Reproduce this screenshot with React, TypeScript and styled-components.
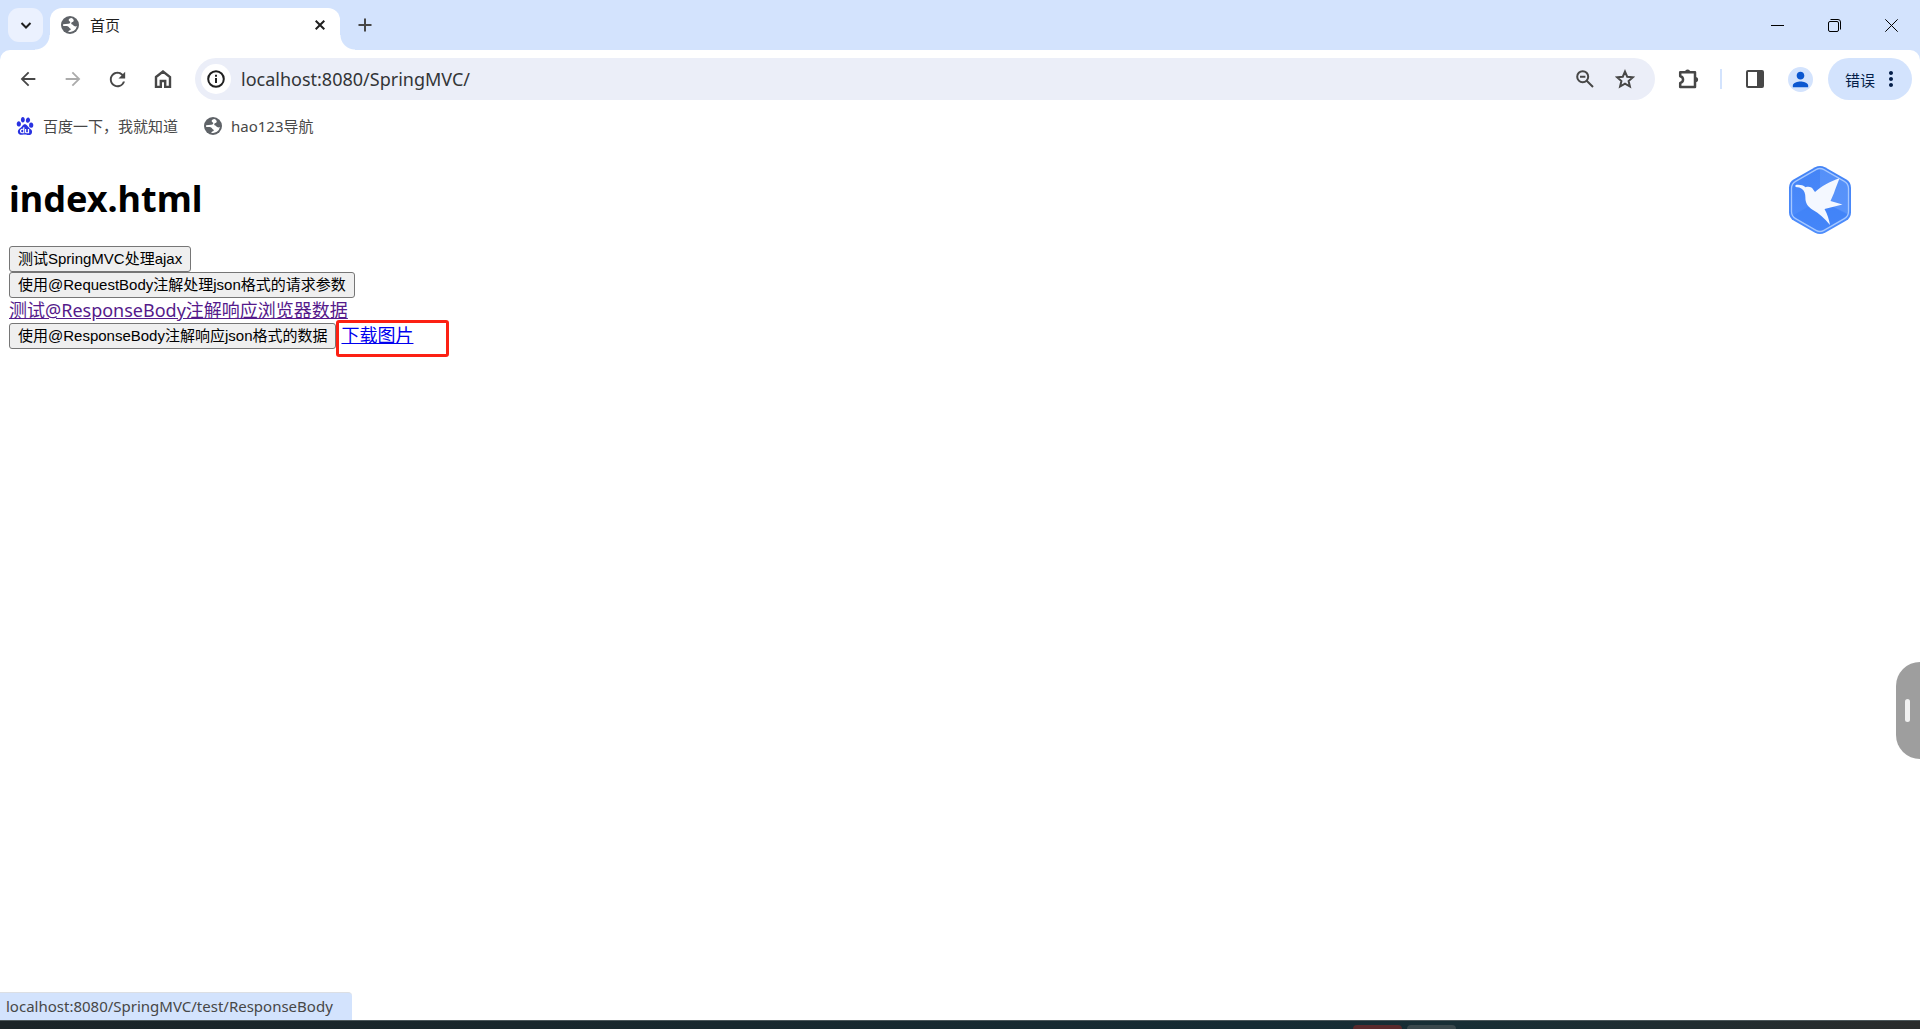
import React from "react";
import styled, { createGlobalStyle, css } from "styled-components";
import { MdArrowBack, MdArrowForward, MdRefresh, MdPerson, MdMoreVert } from "react-icons/md";
import { SiBaidu } from "react-icons/si";

const uiFont = `"Noto Sans", "Noto Sans CJK SC", sans-serif`;

const GlobalStyle = createGlobalStyle`
  *, *::before, *::after { box-sizing: border-box; }
  body { margin: 0; background: #fff; font-family: ${uiFont}; }
`;

const Window = styled.div`
  display: flex;
  flex-direction: column;
  min-height: 100vh;
  background: #fff;
`;

const Chrome = styled.header`
  background: #d3e3fd;
`;

const iconButton = css`
  display: inline-flex;
  align-items: center;
  justify-content: center;
  flex: none;
  border: 0;
  padding: 0;
  background: transparent;
  color: #474747;
`;

const TabStrip = styled.div`
  display: flex;
  align-items: flex-start;
  height: 50px;
  padding: 8px 0 0 8px;
`;

const TabSearch = styled.button`
  ${iconButton}
  width: 35px;
  height: 34px;
  border-radius: 11px;
  background: #ebf1fe;
  color: #1f1f1f;
`;

const Tab = styled.div`
  position: relative;
  display: flex;
  align-items: center;
  gap: 11px;
  width: 290px;
  height: 42px;
  margin-left: 7px;
  padding: 0 10px 8px 11px;
  border-radius: 12px 12px 0 0;
  background: #fff;
  color: #1f1f1f;

  &::before, &::after {
    content: "";
    position: absolute;
    bottom: 0;
    width: 15px;
    height: 15px;
  }
  &::before {
    left: -15px;
    background: radial-gradient(circle at 0 0, transparent 14px, #fff 15px);
  }
  &::after {
    right: -15px;
    background: radial-gradient(circle at 100% 0, transparent 14px, #fff 15px);
  }
`;

const TabTitle = styled.span`
  flex: 1;
  font-size: 15px;
  line-height: 20px;
`;

const TabClose = styled.button`
  ${iconButton}
  width: 20px;
  height: 20px;
  color: #1f1f1f;
`;

const NewTab = styled.button`
  ${iconButton}
  width: 34px;
  height: 34px;
  margin-left: 8px;
`;

const WindowControls = styled.div`
  display: flex;
  margin: -8px 0 0 auto;
`;

const WindowButton = styled.button`
  ${iconButton}
  width: 57px;
  height: 50px;
  color: #000;
`;

const Toolbar = styled.nav`
  display: flex;
  align-items: center;
  padding: 8px 8px 8px 5px;
  border-radius: 10px 10px 0 0;
  background: #fff;
`;

const NavButton = styled.button<{ $faded?: boolean }>`
  ${iconButton}
  width: 45px;
  height: 42px;
  color: ${(p) => (p.$faded ? "#ababab" : "#474747")};
`;

const Omnibox = styled.form`
  display: flex;
  align-items: center;
  flex: 1;
  height: 42px;
  margin-left: 10px;
  padding: 0 10px 0 6px;
  border-radius: 21px;
  background: #ebeef8;
`;

const SiteInfo = styled.button`
  ${iconButton}
  width: 30px;
  height: 30px;
  border-radius: 50%;
  background: #fff;
  color: #1f1f1f;
`;

const Address = styled.input`
  flex: 1;
  min-width: 0;
  height: 30px;
  margin-left: 10px;
  padding: 0;
  border: 0;
  outline: 0;
  background: transparent;
  color: #333537;
  font-family: ${uiFont};
  font-size: 18px;
`;

const OmniButton = styled.button`
  ${iconButton}
  width: 40px;
  height: 40px;
`;

const Actions = styled.div`
  display: flex;
  align-items: center;
  padding-left: 11px;
`;

const Divider = styled.span`
  width: 2px;
  height: 20px;
  margin: 0 10px 0 9px;
  background: #d3e3fd;
`;

const Profile = styled.button`
  ${iconButton}
  width: 25px;
  height: 25px;
  margin: 0 15px 0 11px;
  border-radius: 50%;
  background: #d3e3fd;
  color: #0b57d0;
`;

const ErrorChip = styled.button`
  ${iconButton}
  gap: 4px;
  width: 84px;
  height: 42px;
  padding-left: 8px;
  border-radius: 21px;
  background: #d3e3fd;
  color: #041e49;
  font-family: ${uiFont};
  font-size: 15px;
`;

const Bookmarks = styled.nav`
  display: flex;
  gap: 26px;
  padding: 6px 16px 14px;
  background: #fff;
`;

const Bookmark = styled.a`
  display: flex;
  align-items: center;
  gap: 9px;
  color: #474747;
  font-size: 15px;
  line-height: 24px;
  text-decoration: none;
`;

const Viewport = styled.main`
  position: relative;
  flex: 1;
  padding: 22px 9px 0;
  font-size: 18px;
  line-height: 25px;
`;

const Title = styled.h1`
  margin: 0 0 22px;
  color: #000;
  font-size: 36px;
  line-height: 50px;
`;

const Line = styled.div`
  display: flex;
  align-items: flex-start;
`;

const PageButton = styled.button`
  height: 26px;
  padding: 0 8px;
  border: 1px solid #767676;
  border-radius: 3px;
  background: #efefef;
  color: #000;
  font-family: "Liberation Sans", "Noto Sans CJK SC", sans-serif;
  font-size: 15px;
  line-height: 24px;
  white-space: nowrap;
`;

const PageLink = styled.a<{ $visited?: boolean }>`
  color: ${(p) => (p.$visited ? "#551a8b" : "#0000ee")};
  text-decoration: underline;
  white-space: nowrap;
`;

const Marked = styled.span`
  position: relative;
  padding-left: 5px;

  &::after {
    content: "";
    position: absolute;
    top: -3px;
    left: 0;
    width: 113px;
    height: 37px;
    border: 3px solid #fc2013;
    border-radius: 3px;
    pointer-events: none;
  }
`;

const BirdBadge = styled.button`
  ${iconButton}
  position: absolute;
  top: 13px;
  right: 68px;
`;

const SideHandle = styled.button`
  ${iconButton}
  position: absolute;
  top: 510px;
  right: 0;
  width: 24px;
  height: 97px;
  padding-right: 2px;
  border-radius: 24px 0 0 24px;
  background: #9e9e9e;

  &::before {
    content: "";
    width: 5px;
    height: 23px;
    border-radius: 3px;
    background: #f1f1f1;
  }
`;

const StatusBubble = styled.div`
  position: absolute;
  left: 0;
  bottom: 0;
  padding: 1px 19px 2px 6px;
  border-top: 1px solid #dcdfe4;
  border-radius: 0 4px 0 0;
  background: #d3e3fd;
  color: #474747;
  font-size: 15px;
  line-height: 24px;
`;

const Taskbar = styled.footer`
  display: flex;
  justify-content: flex-end;
  gap: 5px;
  height: 9px;
  padding: 4px 464px 0 0;
  border-top: 1px solid #4d585b;
  background: linear-gradient(90deg, #1b2427, #162b33 65%, #172e35 75%, #2a2c2c);
`;

const TaskItem = styled.span<{ $color: string }>`
  width: 49px;
  border-radius: 4px 4px 0 0;
  background: ${(p) => p.$color};
`;

const Globe = () => (
  <svg width="18" height="18" viewBox="0 0 18 18" aria-hidden="true">
    <circle cx="9" cy="9" r="9" fill="#5f6368" />
    <path fill="#fff" d="M10.500 2C8.800 2.200 7.600 2.900 7.700 4.200c.1 1 1.300 1 1.500 1.900.2 1-.6 1.600-1.800 1.700L2.100 8.200a7 7 0 0 0 .1 1.900c1.800-.2 3.600-.4 4.900.3 1.100.6 1 1.600 2 2 .8.4.9.9.4 1.500-.5.500-1.900.5-2.300 1.800A7 7 0 0 0 15.900 10c-.9.500-1.900.6-2.700.1-.8-.6-1-1.400-2-1.700-.9-.3-1.200-1-.8-1.700.5-.8 1.700-.7 2.100-1.400.4-.8.200-1.400-.1-1.900A7 7 0 0 0 10.500 2z" />
  </svg>
);

const Stroke = ({ d, size, width = 2 }: { d: string; size: number; width?: number }) => (
  <svg width={size} height={size} viewBox={`0 0 ${size} ${size}`} fill="none" stroke="currentColor" strokeWidth={width} aria-hidden="true">
    <path d={d} />
  </svg>
);

const Puzzle = () => (
  <svg width="22" height="22" viewBox="0 0 22 22" aria-hidden="true">
    <path d="M2.200 4.200H17V19H2.200V15c3.800-.8 3.800-6 0-6.800z" fill="none" stroke="currentColor" strokeWidth="2.500" strokeLinejoin="round" />
    <path d="M7 4a2.600 2.600 0 0 1 5.200 0zM17.500 9a2.600 2.600 0 0 1 0 5.200z" fill="currentColor" />
  </svg>
);

const SidePanel = () => (
  <svg width="18" height="18" viewBox="0 0 18 18" aria-hidden="true">
    <rect x="1" y="1" width="16" height="16" rx="1" fill="none" stroke="currentColor" strokeWidth="2" />
    <path d="M11 1h6v16h-6z" fill="currentColor" />
  </svg>
);

const Bird = () => (
  <svg width="64" height="70" viewBox="0 0 64 70" aria-hidden="true">
    <defs>
      <linearGradient id="hex" x1="0" y1="0" x2="0" y2="1">
        <stop offset="0" stopColor="#4383f6" />
        <stop offset="1" stopColor="#4e8dfc" />
      </linearGradient>
    </defs>
    <path d="M27 2.300q5-2.800 10 0l21 12q5 2.900 5 8.500v24.400q0 5.600-5 8.500l-21 12q-5 2.800-10 0l-21-12q-5-2.900-5-8.500V22.800q0-5.600 5-8.500z" fill="url(#hex)" />
    <path d="M32 35V3l28 16v30z" fill="#6ba0fb" opacity=".45" />
    <path d="M32 35L4 51l28 16 28-17z" fill="#3478f3" opacity=".35" />
    <path d="M28 4.600q4-2.200 8 0l20 11.500q4.500 2.600 4.500 7.200v23.400q0 4.600-4.500 7.200L36 65.400q-4 2.200-8 0L8 53.900q-4.500-2.600-4.500-7.200V23.300q0-4.600 4.500-7.200z" fill="none" stroke="#a6c8ff" strokeWidth="1.300" />
    <path d="M7.500 20c4.500-.5 7.500.3 10 2.200 3.500-1.200 6.500-.2 8 2.800l1.500 2C33 21.500 42 16.500 51.500 13.300L47 25l-1 3-3.500 8 12 3.500-18 4.500c3 5.500 4.500 10.500 5.500 16-5.500-7-11-11.500-17-15-5.500-3.300-7.800-7.500-7.600-12.500 0-4-1-6.500-3.400-8.500-1.500-1.300-3.500-2-6.500-2z" fill="#f4f8ff" />
  </svg>
);

export default function App() {
  return (
    <Window>
      <GlobalStyle />
      <Chrome>
        <TabStrip>
          <TabSearch aria-label="搜索标签页"><Stroke size={12} width={2} d="M1.500 4L6 8.500 10.500 4" /></TabSearch>
          <Tab>
            <Globe />
            <TabTitle>首页</TabTitle>
            <TabClose aria-label="关闭标签页"><Stroke size={10} d="M.7.7l8.600 8.600M9.300.7L.7 9.300" /></TabClose>
          </Tab>
          <NewTab aria-label="新标签页"><Stroke size={14} d="M7 .5v13M.5 7h13" /></NewTab>
          <WindowControls>
            <WindowButton aria-label="最小化"><Stroke size={13} width={1} d="M0 6.500h13" /></WindowButton>
            <WindowButton aria-label="最大化">
              <Stroke size={13} width={1} d="M2 2.500h7a1.500 1.500 0 0 1 1.500 1.500v7a1.500 1.500 0 0 1-1.500 1.500H2A1.500 1.500 0 0 1 .5 11V4A1.500 1.500 0 0 1 2 2.500zM2.500.5H10A2.500 2.500 0 0 1 12.500 3v7.500" />
            </WindowButton>
            <WindowButton aria-label="关闭"><Stroke size={13} width={1} d="M.3.3l12.400 12.400M12.700.3L.3 12.700" /></WindowButton>
          </WindowControls>
        </TabStrip>
        <Toolbar aria-label="工具栏">
          <NavButton aria-label="后退"><MdArrowBack size={22} /></NavButton>
          <NavButton aria-label="前进" $faded><MdArrowForward size={22} /></NavButton>
          <NavButton aria-label="重新加载"><MdRefresh size={23} /></NavButton>
          <NavButton aria-label="主页"><Stroke size={18} width={2.4} d="M2 7L9 1.500 16 7v10h-4.800v-6H6.800v6H2z" /></NavButton>
          <Omnibox>
            <SiteInfo type="button" aria-label="查看网站信息">
              <Stroke size={18} d="M9 1.200a7.800 7.800 0 1 1 0 15.600a7.800 7.800 0 1 1 0-15.600zM9 8v5M9 4.800v2" />
            </SiteInfo>
            <Address aria-label="地址" defaultValue="localhost:8080/SpringMVC/" />
            <OmniButton type="button" aria-label="缩放">
              <Stroke size={18} d="M6.700 1.200a5.500 5.500 0 1 1 0 11a5.500 5.500 0 1 1 0-11zM10.700 10.700l6.300 6.300M4 6.700h5.400" />
            </OmniButton>
            <OmniButton type="button" aria-label="收藏">
              <Stroke size={20} d="M10 2.600l2.200 5.100 5.700.5-4.300 3.800 1.300 5.500L10 14.600l-4.900 2.900 1.300-5.500-4.300-3.800 5.700-.5z" />
            </OmniButton>
          </Omnibox>
          <Actions>
            <NavButton aria-label="扩展程序"><Puzzle /></NavButton>
            <Divider />
            <NavButton aria-label="侧边栏"><SidePanel /></NavButton>
            <Profile aria-label="个人资料"><MdPerson size={23} /></Profile>
            <ErrorChip>错误<MdMoreVert size={24} /></ErrorChip>
          </Actions>
        </Toolbar>
        <Bookmarks aria-label="书签">
          <Bookmark href="#baidu"><SiBaidu size={18} color="#2932e1" />百度一下，我就知道</Bookmark>
          <Bookmark href="#hao123"><Globe />hao123导航</Bookmark>
        </Bookmarks>
      </Chrome>
      <Viewport>
        <Title>index.html</Title>
        <Line><PageButton>测试SpringMVC处理ajax</PageButton></Line>
        <Line><PageButton>使用@RequestBody注解处理json格式的请求参数</PageButton></Line>
        <Line><PageLink $visited href="#response">测试@ResponseBody注解响应浏览器数据</PageLink></Line>
        <Line>
          <PageButton>使用@ResponseBody注解响应json格式的数据</PageButton>
          <Marked><PageLink href="#download">下载图片</PageLink></Marked>
        </Line>
        <BirdBadge aria-label="迅雷"><Bird /></BirdBadge>
        <SideHandle aria-label="展开侧栏" />
        <StatusBubble>localhost:8080/SpringMVC/test/ResponseBody</StatusBubble>
      </Viewport>
      <Taskbar>
        <TaskItem $color="#5a2a2c" />
        <TaskItem $color="#3a484c" />
      </Taskbar>
    </Window>
  );
}
